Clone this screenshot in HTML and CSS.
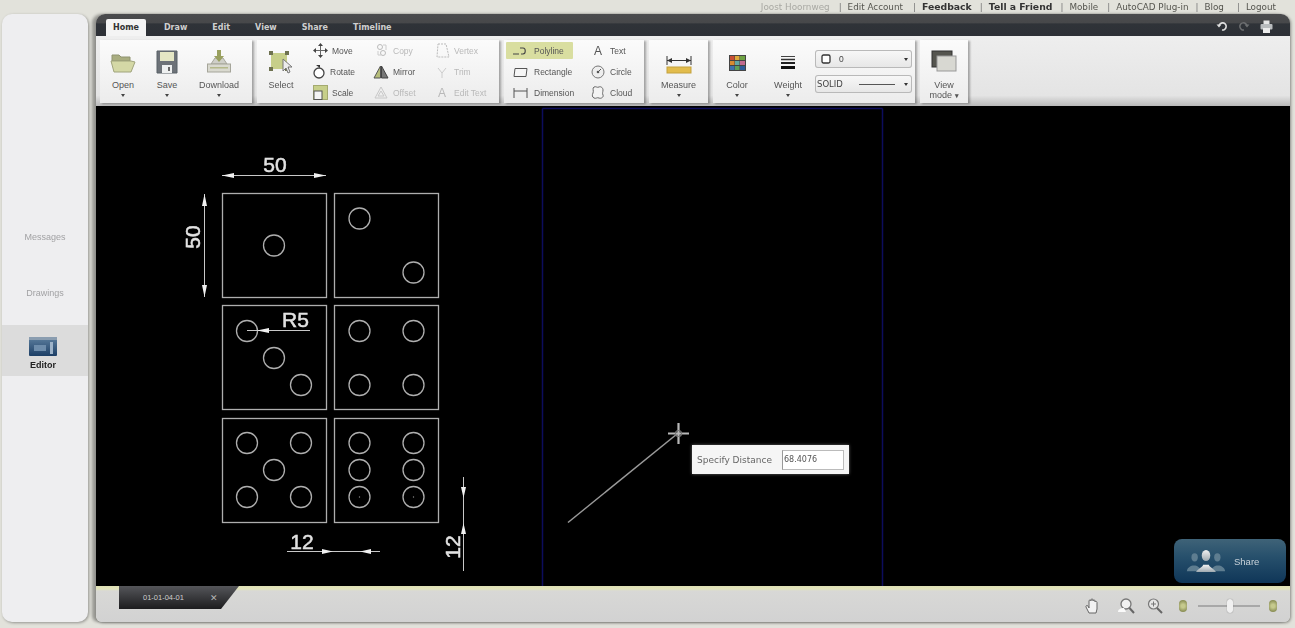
FILE: index.html
```html
<!DOCTYPE html>
<html lang="en">
<head>
<meta charset="utf-8">
<title>Editor</title>
<link rel="stylesheet" href="styles.css">
</head>
<body>
<div class="app">
  <nav class="toplinks">
    <a class="muted">Joost Hoornweg</a><i class="m3">|</i><a>Edit Account</a><i class="m4">|</i><a class="strong">Feedback</a><i>|</i><a class="strong">Tell a Friend</a><i>|</i><a>Mobile</a><i class="m3">|</i><a>AutoCAD Plug-in</a><i class="m1">|</i><a>Blog</a><i class="m7">|</i><a>Logout</a>
  </nav>
  <div class="workspace">
    <aside class="sidebar">
      <div class="side-item">Messages</div>
      <div class="side-item">Drawings</div>
      <div class="side-item active">
        <svg class="editor-icon" width="28" height="20" viewBox="0 0 28 20"><defs><linearGradient id="ed" x1="0" y1="0" x2="0" y2="1"><stop offset="0" stop-color="#5d7f9f"/><stop offset="1" stop-color="#1d3f66"/></linearGradient></defs><rect width="28" height="19" rx="1" fill="url(#ed)"/><rect x="0" y="0" width="28" height="3" fill="#8a9db0"/><rect x="5" y="8" width="12" height="6" fill="#6d8cab"/><rect x="21" y="5" width="3" height="12" fill="#9db3c9"/></svg>
        <span>Editor</span>
      </div>
    </aside>
    <main class="window">
      <header class="titlebar">
        <div class="tabs">
          <span class="tab current">Home</span><span class="tab">Draw</span><span class="tab">Edit</span><span class="tab">View</span><span class="tab">Share</span><span class="tab">Timeline</span>
        </div>
        <div class="title-actions">
          <svg width="12" height="12" viewBox="0 0 12 12"><path d="M3 6a3.600 3.600 0 1 1 3 4" fill="none" stroke="#e0e0e0" stroke-width="1.600"/><path d="M0.500 4.500h5l-2.500 3z" fill="#e0e0e0"/></svg>
          <svg width="12" height="12" viewBox="0 0 12 12"><path d="M9 6a3.600 3.600 0 1 0-3 4" fill="none" stroke="#6d6f71" stroke-width="1.500"/><path d="M11.500 4.500h-5l2.500 3z" fill="#6d6f71"/></svg>
          <svg width="13" height="13" viewBox="0 0 13 13"><rect x="3.500" y="0.500" width="6" height="4" fill="#e6e6e6"/><rect x="0.500" y="4" width="12" height="5.500" rx="1" fill="#b9bcbe"/><rect x="3" y="8" width="7" height="5" fill="#ececec"/></svg>
        </div>
      </header>
      <section class="ribbon">
        <div class="group g-file">
          <div class="big w-open">
            <svg width="26" height="24" viewBox="0 0 26 24"><path d="M2 5h7l2 2h9v4H2z" fill="#a9ad80" stroke="#8f9370"/><path d="M1 11h20l4 1-4 10H4z" fill="#d4d8a6" stroke="#a0a47c"/></svg>
            <span class="lbl">Open</span><span class="caret"></span>
          </div>
          <div class="big w-save">
            <svg width="24" height="24" viewBox="0 0 24 24"><path d="M2 1h20v22H2z" fill="#6d7278" stroke="#596067"/><rect x="5" y="2" width="14" height="9" fill="#e4e6c4"/><rect x="7" y="15" width="10" height="8" fill="#eef0f0"/><rect x="13" y="17" width="2" height="4" fill="#666"/></svg>
            <span class="lbl">Save</span><span class="caret"></span>
          </div>
          <div class="big w-download">
            <svg width="26" height="24" viewBox="0 0 26 24"><path d="M5 14 9 8h8l4 6z" fill="#cfcfc8" stroke="#a5a59a"/><rect x="1.500" y="14" width="23" height="8" fill="#d9d9cf" stroke="#a5a59a"/><rect x="4" y="17" width="18" height="1.500" fill="#b4b88a"/><path d="M11 0h4v6h3l-5 6-5-6h3z" fill="#99a05f"/></svg>
            <span class="lbl">Download</span><span class="caret"></span>
          </div>
        </div>
        <div class="group g-modify">
          <div class="big w-select">
            <svg width="24" height="24" viewBox="0 0 24 24"><rect x="2" y="3" width="16" height="16" fill="#c7cf8a"/><g fill="#6e7250"><rect x="0" y="1" width="4" height="4"/><rect x="16" y="1" width="4" height="4"/><rect x="0" y="17" width="4" height="4"/><rect x="16" y="17" width="4" height="4"/></g><path d="M14 9v12l3-3 2 5 2-1-2-5h4z" fill="#ececec" stroke="#777"/></svg>
            <span class="lbl">Select</span>
          </div>
          <div class="tools cols-61">
            <div class="tool"><span class="ic"><svg width="15" height="15" viewBox="0 0 15 15"><path d="M7.500 0l2.500 3H5zM7.500 15l2.500-3H5zM0 7.500l3-2.500v5zM15 7.500l-3-2.500v5z" fill="#444"/><path d="M7.500 3v9M3 7.500h9" stroke="#666"/></svg></span>Move</div>
            <div class="tool off"><span class="ic"><svg width="15" height="15" viewBox="0 0 15 15"><circle cx="6" cy="4" r="2.500" fill="none" stroke="#bbb"/><circle cx="9" cy="10" r="2.500" fill="none" stroke="#bbb"/><path d="M9 2h3v5M4 8v4h3" fill="none" stroke="#ccc"/></svg></span>Copy</div>
            <div class="tool off"><span class="ic"><svg width="15" height="15" viewBox="0 0 15 15"><path d="M3 1h8l3 13H2z" fill="none" stroke="#bbb" stroke-dasharray="2 1"/></svg></span>Vertex</div>
            <div class="tool tight"><span class="ic"><svg width="14" height="14" viewBox="0 0 14 14"><circle cx="7" cy="8" r="5" fill="#fff" stroke="#444" stroke-width="1.300"/><path d="M4 0h4v3z" fill="#333"/></svg></span>Rotate</div>
            <div class="tool"><span class="ic"><svg width="16" height="14" viewBox="0 0 16 14"><path d="M7.500 1 1 13h6.500z" fill="#b6bd7a" stroke="#555"/><path d="M8.500 1 15 13H8.500z" fill="#777" stroke="#444"/></svg></span>Mirror</div>
            <div class="tool off"><span class="ic"><svg width="14" height="14" viewBox="0 0 14 14"><path d="M3 3l4 5v5M11 3 7 8" fill="none" stroke="#ccc"/></svg></span>Trim</div>
            <div class="tool"><span class="ic"><svg width="15" height="15" viewBox="0 0 15 15"><rect x="0.500" y="0.500" width="14" height="14" fill="#c7cf8a" stroke="#a4aa70"/><rect x="1" y="6" width="8" height="8.500" fill="#f4f4f4" stroke="#555"/></svg></span>Scale</div>
            <div class="tool off"><span class="ic"><svg width="14" height="13" viewBox="0 0 14 13"><path d="M7 1 1 12h12zM7 5 4 10h6z" fill="none" stroke="#c8c8c8"/></svg></span>Offset</div>
            <div class="tool off"><span class="ic glyph">A</span>Edit Text</div>
          </div>
        </div>
        <div class="group g-draw">
          <div class="tools cols-80">
            <div class="tool hl"><span class="ic"><svg width="14" height="10" viewBox="0 0 14 10"><path d="M0 8h6M8 8h2c3 0 3-6 0-6H7" fill="none" stroke="#444" stroke-width="1.100"/></svg></span>Polyline</div>
            <div class="tool"><span class="ic glyph">A</span>Text</div>
            <div class="tool"><span class="ic"><svg width="15" height="12" viewBox="0 0 15 12"><path d="M2 2.500h12l-1 8H1z" fill="#f6f6f6" stroke="#555"/></svg></span>Rectangle</div>
            <div class="tool"><span class="ic"><svg width="14" height="14" viewBox="0 0 14 14"><circle cx="7" cy="7" r="6" fill="#eee" stroke="#777"/><circle cx="7" cy="7" r="1.300" fill="#555"/><path d="M7 7l3-3" stroke="#555"/></svg></span>Circle</div>
            <div class="tool"><span class="ic"><svg width="15" height="12" viewBox="0 0 15 12"><path d="M1 1v10M14 1v10M1 4h13" fill="none" stroke="#555"/></svg></span>Dimension</div>
            <div class="tool"><span class="ic"><svg width="14" height="14" viewBox="0 0 14 14"><path d="M3 1c2-1 3 1 5 0s4 1 4 3-1 3 0 5-2 4-4 3-3 1-5 0-2-3-1-5-1-5 1-6z" fill="#f3f3f3" stroke="#666"/></svg></span>Cloud</div>
          </div>
        </div>
        <div class="group g-measure">
          <div class="big w-measure">
            <svg width="26" height="24" viewBox="0 -3 26 24"><path d="M1 3v9M25 3v9" stroke="#333"/><path d="M1 7.500h24" stroke="#333"/><path d="M1 7.500l5-2.500v5zM25 7.500l-5-2.500v5z" fill="#333"/><rect x="1" y="14" width="24" height="6" fill="#e2bc4c" stroke="#c4a23e"/></svg>
            <span class="lbl">Measure</span><span class="caret"></span>
          </div>
        </div>
        <div class="group g-props">
          <div class="big w-color">
            <svg width="17" height="24" viewBox="0 -1 17 24"><rect y="4" width="17" height="16" fill="#444"/><g><rect x="1" y="5" width="4.500" height="4" fill="#c94f35"/><rect x="6" y="5" width="4.500" height="4" fill="#dda93a"/><rect x="11" y="5" width="5" height="4" fill="#6ea243"/><rect x="1" y="10" width="4.500" height="4" fill="#d88a32"/><rect x="6" y="10" width="4.500" height="4" fill="#63a7a6"/><rect x="11" y="10" width="5" height="4" fill="#c26a8f"/><rect x="1" y="15" width="4.500" height="4" fill="#3f73ad"/><rect x="6" y="15" width="4.500" height="4" fill="#5ca05b"/><rect x="11" y="15" width="5" height="4" fill="#2e5c99"/></g></svg>
            <span class="lbl">Color</span><span class="caret"></span>
          </div>
          <div class="big w-weight">
            <svg width="14" height="24" viewBox="0 -1 14 24"><path d="M0 5.500h14" stroke="#444"/><path d="M0 8.500h14" stroke="#333" stroke-width="1.500"/><path d="M0 12h14" stroke="#222" stroke-width="2"/><path d="M0 16.500h14" stroke="#111" stroke-width="3"/></svg>
            <span class="lbl">Weight</span><span class="caret"></span>
          </div>
          <div class="selects">
            <div class="select"><svg width="10" height="10" viewBox="0 0 10 10"><rect x="1" y="1" width="8" height="8" rx="1.500" fill="#fff" stroke="#333" stroke-width="1.300"/></svg><span class="sel-val">0</span><span class="sel-arrow"></span></div>
            <div class="select"><span class="sel-solid">SOLID</span><span class="sel-line"></span><span class="sel-arrow"></span></div>
          </div>
        </div>
        <div class="group g-view">
          <div class="big w-view">
            <svg width="26" height="24" viewBox="0 0 26 24"><rect x="1" y="1" width="20" height="16" fill="#55554f" stroke="#333"/><rect x="6" y="6" width="19" height="15" fill="#d8d8d2" stroke="#999"/></svg>
            <span class="lbl two">View<br>mode <b class="tiny">▾</b></span>
          </div>
        </div>
      </section>
      <section class="canvas">
        <svg class="drawing" viewBox="96 106 1194 480" width="1194" height="480">
          <path class="sheet" d="M542.500 108.500V586M882.500 108.500V586M542.500 108.500H882.500"/>
          <g class="geo">
            <rect x="222.500" y="193.500" width="104" height="104"/><rect x="334.500" y="193.500" width="104" height="104"/>
            <rect x="222.500" y="305.500" width="104" height="104"/><rect x="334.500" y="305.500" width="104" height="104"/>
            <rect x="222.500" y="418.500" width="104" height="104"/><rect x="334.500" y="418.500" width="104" height="104"/>
            <circle cx="274" cy="245.500" r="10.500"/><circle cx="359.500" cy="218.500" r="10.500"/><circle cx="413.500" cy="272.500" r="10.500"/>
            <circle cx="247" cy="331" r="10.500"/><circle cx="274" cy="358" r="10.500"/><circle cx="301" cy="385" r="10.500"/>
            <circle cx="359.500" cy="331" r="10.500"/><circle cx="413.500" cy="331" r="10.500"/><circle cx="359.500" cy="385" r="10.500"/><circle cx="413.500" cy="385" r="10.500"/>
            <circle cx="247" cy="443" r="10.500"/><circle cx="301" cy="443" r="10.500"/><circle cx="274" cy="470" r="10.500"/><circle cx="247" cy="497" r="10.500"/><circle cx="301" cy="497" r="10.500"/>
            <circle cx="359.500" cy="443" r="10.500"/><circle cx="413.500" cy="443" r="10.500"/><circle cx="359.500" cy="470" r="10.500"/><circle cx="413.500" cy="470" r="10.500"/><circle cx="359.500" cy="497" r="10.500"/><circle cx="413.500" cy="497" r="10.500"/>
          </g>
          <g class="dots"><circle cx="359.500" cy="497" r="0.700"/><circle cx="413.500" cy="497" r="0.700"/></g>
          <g class="dim">
            <path d="M222 175.500H326M204.500 194V297M247 330.500H310M287 551.500H380M463.500 477V571"/>
            <path class="arr" d="M222 175.500l12-2.500v5zM326 175.500l-12-2.500v5zM204.500 194l-2.500 12h5zM204.500 297l-2.500-12h5zM257 330.500l12-2.500v5zM333 551.500l-11-2.500v5zM360 551.500l11-2.500v5zM463.500 498l-2.500-11h5zM463.500 523l-2.500 11h5z"/>
          </g>
          <text class="dimtxt" x="275" y="172" text-anchor="middle">50</text>
          <text class="dimtxt" transform="translate(200 237) rotate(-90)" text-anchor="middle">50</text>
          <text class="dimtxt" x="282" y="327">R5</text>
          <text class="dimtxt" x="302" y="548.500" text-anchor="middle">12</text>
          <text class="dimtxt" transform="translate(459.500 547) rotate(-90)" text-anchor="middle">12</text>
          <path class="rubber" d="M568 522.500 677 434"/>
          <path class="cross" d="M678.500 423V444M668 433.500H689"/>
          <circle class="crossc" cx="678.500" cy="433.500" r="3"/>
        </svg>
        <div class="prompt"><span>Specify Distance</span><span class="prompt-input">68.4076</span></div>
        <div class="share">
          <svg width="44" height="24" viewBox="0 0 62 26" preserveAspectRatio="none"><defs><linearGradient id="pp" x1="0" y1="0" x2="0" y2="1"><stop offset="0" stop-color="#f2f2f2"/><stop offset="1" stop-color="#9ea9b0"/></linearGradient></defs><g fill="#5e7d90"><circle cx="15" cy="9" r="4.500"/><circle cx="47" cy="9" r="4.500"/><path d="M4 24c2-8 18-8 20 0zM38 24c2-8 18-8 20 0z"/></g><circle cx="31" cy="7" r="6" fill="url(#pp)"/><path d="M17 25c3-4 9-5 10-8h8c1 3 7 4 10 8z" fill="url(#pp)"/></svg>
          <span>Share</span>
        </div>
      </section>
      <footer class="bottombar">
        <div class="doc-tab"><span class="doc-name">01-01-04-01</span><span class="doc-close">✕</span></div>
        <div class="viewtools">
          <svg class="vt-hand" width="16" height="17" viewBox="0 0 16 17"><path d="M4 15 1 9c-.5-1.500 1-2 2-1l1 2V3c0-1.500 2-1.500 2 0V2c0-1.500 2-1.500 2 0v1c0-1.500 2-1.500 2 0v1c0-1 2-1 2 .5V11l-1 4z" fill="#f2f2f2" stroke="#666"/></svg>
          <svg class="vt-zoom" width="18" height="16" viewBox="0 0 18 16"><circle cx="9" cy="6" r="5" fill="#f1f1f1" stroke="#777" stroke-width="1.300"/><path d="M12.500 10 17 15" stroke="#666" stroke-width="2"/><path d="M1 14c0-3 3-4 6-4l2 4z" fill="#fafafa"/></svg>
          <svg width="16" height="16" viewBox="0 0 16 16"><circle cx="6.500" cy="6" r="5" fill="#e6e6e6" stroke="#777" stroke-width="1.200"/><path d="M6.500 3.500v5M4 6h5" stroke="#777"/><path d="M10 10l5 5" stroke="#666" stroke-width="2"/></svg>
          <span class="slider-cap"></span>
          <span class="slider"><span class="thumb"></span></span>
          <span class="slider-cap"></span>
        </div>
      </footer>
    </main>
  </div>
</div>
</body>
</html>
```
FILE: styles.css
```css
* { box-sizing: border-box; }
html, body { margin: 0; height: 100%; overflow: hidden; }
body { background: #e2e2db; font-family: "Liberation Sans", Arial, sans-serif; }
.app { width: 1295px; height: 628px; display: flex; flex-direction: column; filter: blur(0.55px); }

.toplinks { height: 14px; display: flex; justify-content: flex-end; align-items: center; padding-right: 19px; gap: 6px; font: 8.8px/12px "DejaVu Sans", sans-serif; color: #55554f; white-space: nowrap; }
.toplinks i { font-style: normal; color: #777; margin-left: 2px; }
.toplinks i.m1 { margin-left: 1px; }
.toplinks i.m3 { margin-left: 3px; }
.toplinks i.m4 { margin-left: 4px; }
.toplinks i.m7 { margin-left: 7px; }
.toplinks .muted { color: #a9a9a3; }
.toplinks .strong { font-weight: 700; font-size: 9.3px; color: #333; }

.workspace { flex: 1; display: flex; gap: 8px; padding: 0 5px 6px 2px; min-height: 0; }
.sidebar { width: 86px; background: #eeeef0; border-radius: 10px; padding-top: 195px; box-shadow: 1px 1px 3px rgba(0,0,0,.35); flex: none; }
.side-item { height: 56px; display: flex; align-items: center; justify-content: center; font: 9px "Liberation Sans", sans-serif; color: #a2a2a4; }
.side-item.active { height: 51px; margin-top: 4px; background: #dcdcdc; flex-direction: column; color: #222; font-weight: 700; padding-top: 6px; padding-right: 4px; }
.side-item.active span { margin-top: 3px; }

.window { flex: 1; min-width: 0; display: flex; flex-direction: column; border-radius: 9px 9px 6px 6px; overflow: hidden; box-shadow: -4px 0 3px rgba(0,0,0,.32), 1px 1px 3px rgba(0,0,0,.4); position: relative; }
.titlebar { height: 22px; flex: none; background: linear-gradient(#4b4c4e 0, #47484a 40%, #2f3338 45%, #2d3036 100%); display: flex; align-items: flex-end; justify-content: space-between; padding: 0 17px 0 10px; }
.tabs { display: flex; gap: 11px; height: 17px; }
.tab { padding: 0 7px; font: 700 8px/18px "DejaVu Sans", sans-serif; color: #cfcfcf; }
.tab.current { background: #f4f4f4; color: #333; border-radius: 2px 2px 0 0; }
.title-actions { display: flex; gap: 10px; align-items: center; height: 22px; padding-top: 2px; }

.ribbon { height: 70px; flex: none; display: flex; gap: 5px; padding: 4px 0 3px 4px; background: linear-gradient(#eeeeee, #e4e4e4 85%, #b9b9b9); }
.group { height: 63px; background: linear-gradient(#fbfbfb, #ececec); display: flex; box-shadow: 2px 1px 2px rgba(0,0,0,.3); font-size: 9px; color: #555; flex: none; }
.g-file { width: 152px; }
.g-modify { width: 242px; }
.g-draw { width: 140px; padding-left: 2px; }
.g-measure { width: 59px; }
.g-props { width: 202px; }
.g-view { width: 48px; }

.big { display: flex; flex-direction: column; align-items: center; padding-top: 10px; flex: none; }
.big svg { height: 24px; flex: none; }
.lbl { margin-top: 6px; line-height: 11px; text-align: center; white-space: nowrap; }
.lbl.two { margin-top: 6px; line-height: 10px; }
.tiny { font-size: 7px; }
.caret { width: 0; height: 0; margin-top: 3px; border: 2.5px solid transparent; border-top: 3px solid #444; border-bottom: 0; }
.w-open { width: 46px; }
.w-save { width: 42px; }
.w-download { width: 62px; }
.w-select { width: 48px; }
.w-measure { width: 59px; }
.w-color { width: 48px; }
.w-weight { width: 54px; }
.w-view { width: 48px; }

.tools { display: grid; grid-template-rows: repeat(3, 21px); margin-left: 3px; font-size: 8.5px; }
.cols-61 { grid-template-columns: repeat(3, 61px); }
.cols-80 { grid-template-columns: 80px 58px; margin-left: 0; }
.cols-80 .tool:nth-child(odd) .ic { width: 28px; }
.tool { display: flex; align-items: center; white-space: nowrap; color: #555; }
.tool.tight .ic { width: 22px; }
.tool.off { color: #b9b9b9; }
.tool.hl { background: #d9dea0; width: 67px; height: 17px; align-self: center; border-radius: 1px; }
.ic { width: 24px; display: flex; justify-content: center; align-items: center; flex: none; }
.glyph { font-size: 12px; line-height: 14px; }

.selects { display: flex; flex-direction: column; gap: 7px; padding-top: 10px; width: 97px; }
.select { height: 18px; display: flex; align-items: center; gap: 8px; padding: 0 4px 0 6px; border-radius: 3px; background: linear-gradient(#f8f8f8, #e6e6e6); box-shadow: inset 0 0 0 1px #b9b9b9; color: #444; font-size: 8.5px; }
.sel-val { flex: 1; }
.sel-solid { font-family: "DejaVu Sans", sans-serif; font-size: 8.5px; margin-left: -4px; }
.sel-line { flex: 1; height: 1px; background: #555; margin: 0 1px 0 8px; }
.sel-arrow { width: 0; height: 0; border: 2.5px solid transparent; border-top: 3px solid #333; border-bottom: 0; flex: none; }

.canvas { height: 480px; flex: none; background: #000; position: relative; overflow: hidden; }
.drawing { display: block; }
.sheet { fill: none; stroke: #0c0c5c; stroke-width: 1.5; }
.geo rect, .geo circle { fill: none; stroke: #aeaeae; stroke-width: 1.3; }
.dots circle { fill: #888; }
.dim path { stroke: #c8c8c8; fill: none; stroke-width: 1; }
.dim .arr { fill: #f0f0f0; stroke: none; }
.dimtxt { font-family: "Liberation Sans", sans-serif; font-size: 21px; fill: #e2e2e2; stroke: #e2e2e2; stroke-width: 0.5; }
.rubber { stroke: #9a9a9a; stroke-width: 1.5; fill: none; }
.cross { stroke: #b8b8b8; stroke-width: 2.2; fill: none; }
.crossc { fill: none; stroke: #7a7a7a; stroke-width: 1.2; }

.prompt { position: absolute; left: 596px; top: 339px; width: 157px; height: 29px; background: #f5f5f5; display: flex; align-items: center; justify-content: space-between; padding: 0 5px; font: 9px "DejaVu Sans", sans-serif; color: #666; box-shadow: 0 0 3px rgba(255,255,255,.4); }
.prompt-input { width: 62px; height: 20px; background: #fff; border: 1px solid #bbb; border-left-color: #999; line-height: 18px; font-size: 8px; padding-left: 1px; color: #555; }

.share { position: absolute; left: 1078px; top: 433px; width: 112px; height: 44px; border-radius: 8px; background: linear-gradient(#3f6378, #27506c 40%, #0f3658); display: flex; align-items: center; padding-left: 10px; color: #c8d2d9; font-size: 9.5px; gap: 6px; }

.bottombar { height: 36px; flex: none; background: linear-gradient(#dfe0b4 0, #e3e4bd 3px, #d8d8d6 5px, #d2d2d2 100%); display: flex; justify-content: space-between; padding-left: 23px; }
.doc-tab { width: 120px; height: 23px; background: linear-gradient(#55565a, #1c1c1e); clip-path: polygon(0 0, 100% 0, 85% 100%, 0 100%); display: flex; align-items: center; padding-left: 24px; color: #cfcfcf; font-size: 7.5px; }
.doc-name { width: 67px; }
.doc-close { font-size: 9px; color: #b5b5b5; }
.viewtools { display: flex; align-items: center; gap: 13px; padding: 4px 13px 0 0; height: 100%; }
.vt-hand { margin-right: 3px; }
.vt-zoom { margin-right: -1px; }
.slider-cap { width: 8px; height: 12px; border-radius: 4px; background: radial-gradient(circle, #c5c98d 25%, #8d9158 75%); margin-left: 3px; }
.slider { width: 62px; height: 2px; background: #a8a8a8; position: relative; margin: 0 -7px 0 -2px; }
.thumb { position: absolute; left: 29px; top: -6px; width: 6px; height: 14px; border-radius: 3px; background: #f0f0f0; box-shadow: 0 0 1px #666; }
```
